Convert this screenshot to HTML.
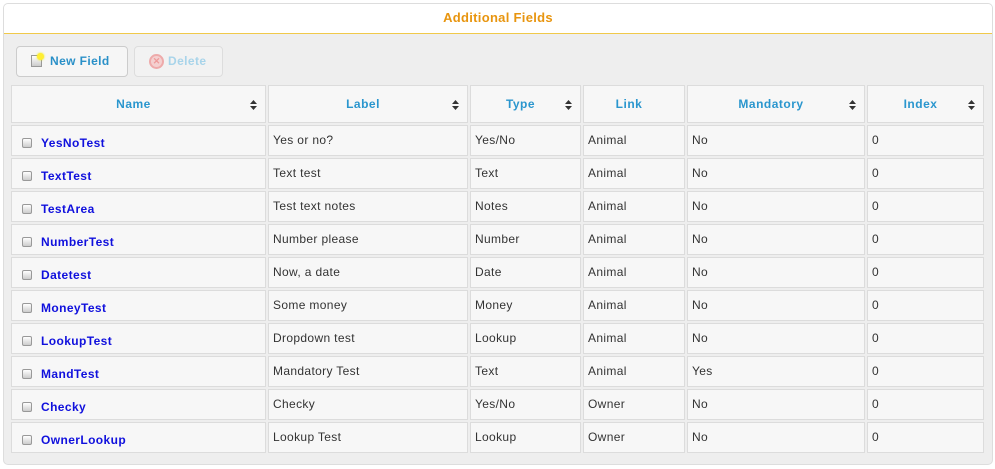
<!DOCTYPE html>
<html><head><meta charset="utf-8"><style>
*{box-sizing:border-box;margin:0;padding:0}
body{width:995px;height:469px;background:#fff;font-family:"Liberation Sans",Arial,sans-serif;font-size:12px;color:#333;position:relative;overflow:hidden}
.panel{position:absolute;left:3px;top:3px;width:990px;height:462px;border:1px solid #ddd;border-radius:5px;background:#eeeeee;overflow:hidden}
.hd{height:30px;background:#fff;border-bottom:1px solid #f0c94a;text-align:center;color:#e8950f;font-weight:bold;font-size:13px;letter-spacing:.3px;line-height:28px}
.btn{position:absolute;top:42px;height:31px;border:1px solid #ccc;border-radius:4px;background:#f6f6f6;font-weight:bold;font-size:12px;line-height:29px;color:#2a90c8;letter-spacing:.4px}
.btn.dis{color:#a8d4ea;border-color:#ddd;background:#f2f2f2}
.tbl{position:absolute;left:7px;top:81px}
.row{display:flex;gap:2px;margin-bottom:2px}
.c{border:1px solid #dcdcdc;background:#f7f7f7;height:31px;padding:7px 0 0 4px;letter-spacing:.35px;position:relative}
.h .c{height:38px;padding:0 10px 0 0;text-align:center;line-height:36px;color:#2a96ce;font-weight:bold;letter-spacing:.5px}
.sort{position:absolute;right:8px;top:14px;width:7px;height:10px}
.n{padding:10px 0 0 10px;color:#1010dd;font-weight:bold;letter-spacing:.4px}
.cb{display:inline-block;width:10px;height:10px;border:1px solid #999;border-radius:2px;background:linear-gradient(#fff,#ccc);vertical-align:-1px;margin-right:9px}
.w1{width:255px}.w2{width:200px}.w3{width:111px}.w4{width:102px}.w5{width:178px}.w6{width:117px}
</style></head><body>
<div class="panel">
<div class="hd">Additional Fields</div>
<div class="btn" style="left:12px;width:112px;padding-left:33px">New Field
<span style="position:absolute;left:14px;top:8px;width:11px;height:12px;border:1px solid #999;background:linear-gradient(#fff,#ccc)"></span>
<span style="position:absolute;left:20px;top:6px;width:7px;height:7px;border-radius:50%;background:#ffee33;box-shadow:0 0 2px #ee0"></span></div>
<div class="btn dis" style="left:130px;width:89px;padding-left:33px">Delete
<span style="position:absolute;left:14px;top:7px;width:15px;height:15px;border-radius:50%;border:2px solid #eaa;background:#f4d0d0;color:#e99;font-size:9px;line-height:11px;text-align:center;letter-spacing:0">✕</span></div>
<div class="tbl">
<div class="row h">
<div class="c w1">Name<svg class="sort" viewBox="0 0 7 10"><path d="M0 4L3.5 0L7 4ZM0 6L3.5 10L7 6Z" fill="#333"/></svg></div>
<div class="c w2">Label<svg class="sort" viewBox="0 0 7 10"><path d="M0 4L3.5 0L7 4ZM0 6L3.5 10L7 6Z" fill="#333"/></svg></div>
<div class="c w3">Type<svg class="sort" viewBox="0 0 7 10"><path d="M0 4L3.5 0L7 4ZM0 6L3.5 10L7 6Z" fill="#333"/></svg></div>
<div class="c w4">Link</div>
<div class="c w5">Mandatory<svg class="sort" viewBox="0 0 7 10"><path d="M0 4L3.5 0L7 4ZM0 6L3.5 10L7 6Z" fill="#333"/></svg></div>
<div class="c w6">Index<svg class="sort" viewBox="0 0 7 10"><path d="M0 4L3.5 0L7 4ZM0 6L3.5 10L7 6Z" fill="#333"/></svg></div>
</div>
<div class="row"><div class="c w1 n"><span class="cb"></span>YesNoTest</div><div class="c w2">Yes or no?</div><div class="c w3">Yes/No</div><div class="c w4">Animal</div><div class="c w5">No</div><div class="c w6">0</div></div>
<div class="row"><div class="c w1 n"><span class="cb"></span>TextTest</div><div class="c w2">Text test</div><div class="c w3">Text</div><div class="c w4">Animal</div><div class="c w5">No</div><div class="c w6">0</div></div>
<div class="row"><div class="c w1 n"><span class="cb"></span>TestArea</div><div class="c w2">Test text notes</div><div class="c w3">Notes</div><div class="c w4">Animal</div><div class="c w5">No</div><div class="c w6">0</div></div>
<div class="row"><div class="c w1 n"><span class="cb"></span>NumberTest</div><div class="c w2">Number please</div><div class="c w3">Number</div><div class="c w4">Animal</div><div class="c w5">No</div><div class="c w6">0</div></div>
<div class="row"><div class="c w1 n"><span class="cb"></span>Datetest</div><div class="c w2">Now, a date</div><div class="c w3">Date</div><div class="c w4">Animal</div><div class="c w5">No</div><div class="c w6">0</div></div>
<div class="row"><div class="c w1 n"><span class="cb"></span>MoneyTest</div><div class="c w2">Some money</div><div class="c w3">Money</div><div class="c w4">Animal</div><div class="c w5">No</div><div class="c w6">0</div></div>
<div class="row"><div class="c w1 n"><span class="cb"></span>LookupTest</div><div class="c w2">Dropdown test</div><div class="c w3">Lookup</div><div class="c w4">Animal</div><div class="c w5">No</div><div class="c w6">0</div></div>
<div class="row"><div class="c w1 n"><span class="cb"></span>MandTest</div><div class="c w2">Mandatory Test</div><div class="c w3">Text</div><div class="c w4">Animal</div><div class="c w5">Yes</div><div class="c w6">0</div></div>
<div class="row"><div class="c w1 n"><span class="cb"></span>Checky</div><div class="c w2">Checky</div><div class="c w3">Yes/No</div><div class="c w4">Owner</div><div class="c w5">No</div><div class="c w6">0</div></div>
<div class="row"><div class="c w1 n"><span class="cb"></span>OwnerLookup</div><div class="c w2">Lookup Test</div><div class="c w3">Lookup</div><div class="c w4">Owner</div><div class="c w5">No</div><div class="c w6">0</div></div>
</div>
</div>
</body></html>
